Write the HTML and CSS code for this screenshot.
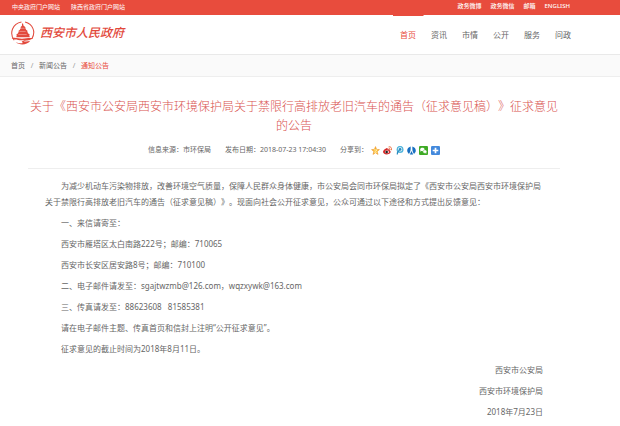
FILE: index.html
```html
<!DOCTYPE html>
<html lang="zh-CN">
<head>
    <meta charset="UTF-8">
    <title>通知公告 - 西安市人民政府</title>
    <link rel="stylesheet" href="styles.css">
</head>
<body>
    <div class="topbar">
        <div class="links">
            <a href="#">中央政府门户网站</a>
            <a href="#">陕西省政府门户网站</a>
        </div>
        <div class="links tools">
            <a href="#">政务微博</a>
            <a href="#">政务微信</a>
            <a href="#">邮箱</a>
            <a href="#">ENGLISH</a>
        </div>
    </div>

    <header class="header">
        <a class="logo" href="#">
            <svg class="logo-icon" viewBox="0 0 48 48" fill="none" stroke="#e2493c">
                <path d="M8 37C-2 23 5 5 22 2M29 2c15 4 21 19 13 32" stroke-width="2"/>
                <path d="M23 5h2l1 4 4 3-1 1 2 4 3 2-1 1 2 4 3 2-1 1 1 4H12l1-4-1-1 3-2 2-4-1-1 3-2 2-4-1-1 3-3z" fill="#e2493c" stroke="none"/>
                <path d="M20 14h8M18 20h12M16 26h16" stroke="#fff" stroke-width=".7"/>
                <path d="M3 33c8-2 13 1 20 1 7 0 13-2 21-1-5 5-12 3-18 6 5 1 9 0 13-1-7 9-20 9-28 3 6 2 10 2 14 1-6-3 1-4 4-5-10-1-17 1-26-4z" fill="#e2493c" stroke="none"/>
            </svg>
            <span class="logo-text">西安市人民政府</span>
        </a>
        <nav class="nav">
            <a class="active" href="#">首页</a>
            <a href="#">资讯</a>
            <a href="#">市情</a>
            <a href="#">公开</a>
            <a href="#">服务</a>
            <a href="#">问政</a>
        </nav>
    </header>

    <div class="crumbs">
        <a href="#">首页</a><i>/</i>
        <a href="#">新闻公告</a><i>/</i>
        <a class="current" href="#">通知公告</a>
    </div>

    <div class="article">
        <h1>关于《西安市公安局西安市环境保护局关于禁限行高排放老旧汽车的通告（征求意见稿）》征求意见的公告</h1>
        <div class="info">
            <span>信息来源：市环保局</span>
            <span>发布日期：2018-07-23 17:04:30</span>
            <div class="share">
                <span>分享到：</span>
                <a href="#" aria-label="QQ空间">
                    <svg viewBox="0 0 16 16"><path d="M8 1l2 5 5 .4-4 3.500L12.500 15 8 12l-4.500 3L5 9.900 1 6.400 6 6z" fill="#fbb52b" stroke="#ec952a"/><path d="M5 7h6l-5 4h5" fill="none" stroke="#fff3b0" stroke-width="1.500"/></svg>
                </a>
                <a href="#" aria-label="新浪微博">
                    <svg viewBox="0 0 16 16"><path d="M6 4c2-1 3 0 2 2 3-1 5 0 4 2 3 1 2 7-5 7S-1 10 1 8c1-2 3-3 5-4z" fill="#d52b2b"/><ellipse cx="7" cy="10.500" rx="3.500" ry="2.500" fill="#fff"/><circle cx="6.500" cy="10.700" r="2.300" fill="#222"/><path d="M10 1.500c4-1 6 2 5 6M10 4c2 0 3 1 2.500 3" fill="none" stroke="#e8602c" stroke-width="1.500"/></svg>
                </a>
                <a href="#" aria-label="腾讯微博">
                    <svg viewBox="0 0 16 16" fill="none"><circle cx="9" cy="6" r="5" stroke="#55b6dc" stroke-width="2.500"/><circle cx="9" cy="6" r="2.500" fill="#2a8cc0"/><path d="M8 7c-3 2-4 5-4 8" stroke="#2a8cc0" stroke-width="2"/></svg>
                </a>
                <a href="#" aria-label="人人网">
                    <svg viewBox="0 0 16 16" fill="#176fc1"><path d="M6.500 1v4c0 4-1 6-3 9-5-4-4-11 3-13zM9.500 1v4c0 4 1 6 3 9 5-4 4-11-3-13zM8 9l3 6H5z"/></svg>
                </a>
                <a href="#" aria-label="微信">
                    <svg viewBox="0 0 16 16"><rect width="16" height="16" rx="2" fill="#3eaa25"/><path d="M2 6c0-4 8-4 8 0S5 9 4 9l-2 1 .5-2z" fill="#fff"/><path d="M7 10c0-4 7-4 7 0 0 1-.5 2-1 2l.5 2-2-1C9 13 7 12 7 10z" fill="#fff" stroke="#3eaa25" stroke-width=".8"/></svg>
                </a>
                <a href="#" aria-label="更多">
                    <svg viewBox="0 0 16 16"><rect width="16" height="16" rx="2" fill="#4389dc"/><path d="M8 3v10M3 8h10" stroke="#fff" stroke-width="3"/></svg>
                </a>
            </div>
        </div>

        <div class="content">
            <p>为减少机动车污染物排放，改善环境空气质量，保障人民群众身体健康，市公安局会同市环保局拟定了《西安市公安局西安市环境保护局关于禁限行高排放老旧汽车的通告（征求意见稿）》。现面向社会公开征求意见，公众可通过以下途径和方式提出反馈意见：</p>
            <p>一、来信请寄至：</p>
            <p>西安市雁塔区太白南路222号；邮编：710065</p>
            <p>西安市长安区居安路8号；邮编：710100</p>
            <p>二、电子邮件请发至：sgajtwzmb@126.com，wqzxywk@163.com</p>
            <p>三、传真请发至：88623608 &nbsp; 81585381</p>
            <p>请在电子邮件主题、传真首页和信封上注明“公开征求意见”。</p>
            <p>征求意见的截止时间为2018年8月11日。</p>
            <p class="sign">西安市公安局</p>
            <p class="sign">西安市环境保护局</p>
            <p class="sign">2018年7月23日</p>
        </div>
    </div>
</body>
</html>
```
FILE: styles.css
```css
body,h1,p{
	margin: 0;
	padding: 0;
}
body{
	font-family: "Noto Sans", "Noto Sans CJK SC", sans-serif;
	font-size: 8px;
	line-height: 16px;
	color: #666;
	background-color: #fff;
	text-spacing-trim: space-all;
}
a{
	color: inherit;
	text-decoration: none;
}

/* 顶部 */
.topbar{
	display: flex;
	justify-content: space-between;
	height: 15px;
	padding: 0 50px 0 12px;
	background-color: #e84c3d;
	color: #fff;
	font-size: 6px;
	line-height: 15px;
}
.links{
	display: flex;
	gap: 11px;
}
.tools{
	gap: 9px;
	font-weight: 500;
	line-height: 12px;
}
.header{
	display: flex;
	justify-content: space-between;
	height: 39px;
	padding: 0 41px 0 10px;
	border-bottom: 1px solid #e9e9e9;
}
.logo{
	display: flex;
	align-items: center;
	gap: 5px;
	height: 36px;
}
.logo-icon{
	width: 25px;
	height: 25px;
}
.logo-text{
	color: #e2493c;
	font-size: 12px;
	font-weight: 500;
	font-style: italic;
}
.nav{
	display: flex;
}
.nav a{
	padding: 0 7px;
	border-top: 1px solid transparent;
	border-right: 1px solid transparent;
	line-height: 38px;
}
.nav .active{
	border-top-color: #e84c3d;
	color: #e84c3d;
}

/* 面包屑 */
.crumbs{
	display: flex;
	height: 21px;
	padding-left: 11px;
	background-color: #fafafa;
	border-bottom: 1px solid #eee;
	font-size: 7px;
	line-height: 21px;
}
.crumbs i{
	width: 14px;
	font-style: normal;
	text-align: center;
	color: #999;
}
.crumbs .current{
	color: #e84c3d;
}

/* 正文 */
.article{
	padding: 20px 60px 0 28px;
}
h1{
	color: #d9534f;
	font-size: 12px;
	font-weight: 300;
	line-height: 19px;
	text-align: center;
}
.info{
	display: flex;
	justify-content: center;
	gap: 14px;
	padding: 7px 0 10px;
	border-bottom: 1px solid #eee;
	font-size: 7px;
}
.share{
	display: flex;
	align-items: center;
	gap: 3px;
}
.share svg{
	display: block;
	width: 9px;
	height: 9px;
}
.content{
	padding: 9px 17px 0;
}
.content p{
	margin-bottom: 5px;
	text-indent: 2em;
}
.content .sign{
	text-align: right;
}
.content p:last-child{
	margin-bottom: 0;
}
```
